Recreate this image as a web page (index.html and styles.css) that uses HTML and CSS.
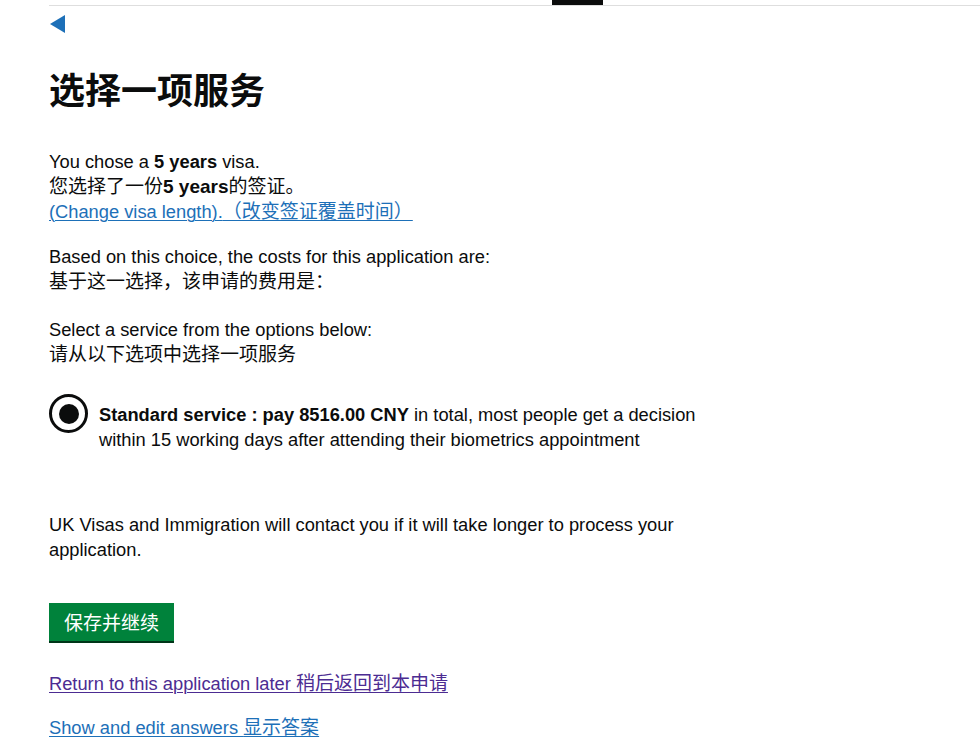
FILE: index.html
```html
<!DOCTYPE html>
<html lang="en">
<head>
<meta charset="utf-8">
<title>选择一项服务</title>
<link rel="stylesheet" href="styles.css">
</head>
<body>
<div class="top"><span class="top-bar"></span></div>
<main class="page">
  <a class="back" href="#" aria-label="Back"></a>
  <h1 class="title" lang="zh-CN">选择一项服务</h1>
  <div class="column">
    <p class="body">You chose a <b>5 years</b> visa.<br><span lang="zh-CN">您选择了一份<b>5 years</b>的签证。</span><br><a class="link" href="#">(Change visa length).<span lang="zh-CN">（改变签证覆盖时间）</span></a></p>
    <p class="body body-costs">Based on this choice, the costs for this application are:<br><span lang="zh-CN">基于这一选择，该申请的费用是：</span></p>
    <p class="body body-select">Select a service from the options below:<br><span lang="zh-CN">请从以下选项中选择一项服务</span></p>
    <div class="radio">
      <span class="radio-circle"><span class="radio-dot"></span></span>
      <label class="radio-label"><b>Standard service : pay 8516.00 CNY</b> in total, most people get a decision within 15 working days after attending their biometrics appointment</label>
    </div>
    <p class="body body-note">UK Visas and Immigration will contact you if it will take longer to process your application.</p>
    <button class="button" type="button" lang="zh-CN">保存并继续</button>
    <p class="body body-return"><a class="link link-visited" href="#">Return to this application later <span lang="zh-CN">稍后返回到本申请</span></a></p>
    <p class="body body-show"><a class="link" href="#">Show and edit answers <span lang="zh-CN">显示答案</span></a></p>
  </div>
</main>
</body>
</html>
```
FILE: styles.css
```css
html, body {
  margin: 0;
  padding: 0;
  background: #ffffff;
}
body {
  font-family: "Liberation Sans", "Noto Sans CJK SC", sans-serif;
  font-size: 18.3px;
  line-height: 25px;
  color: #0b0c0c;
}
[lang="zh-CN"] {
  font-family: "Liberation Sans", "Noto Sans CJK SC", sans-serif;
  font-size: 19px;
}
.top {
  display: flex;
  margin-left: 49px;
  height: 5px;
  border-bottom: 1px solid #dedede;
}
.top-bar {
  display: block;
  width: 51px;
  height: 5px;
  margin-left: 503px;
  background: #0b0c0c;
}
.page {
  padding-left: 49px;
}
.back {
  display: block;
  width: 0;
  height: 0;
  margin-top: 9px;
  margin-left: 1px;
  border-top: 9px solid transparent;
  border-bottom: 9px solid transparent;
  border-right: 15px solid #1d70b8;
}
.title {
  margin: 35px 0 41px;
  font-family: "Noto Sans CJK SC", sans-serif;
  font-size: 36px;
  line-height: 40px;
  font-weight: 700;
}
.column {
  width: 676px;
}
.body {
  margin: 0 0 20px;
}
.body-costs {
  margin-bottom: 23px;
}
.body-select {
  margin-bottom: 27px;
}
.link {
  color: #1d70b8;
  text-decoration: underline;
  text-decoration-thickness: 1px;
  text-underline-offset: 2px;
}
.link-visited {
  color: #4c2c92;
}
.radio {
  display: flex;
  align-items: flex-start;
  margin-bottom: 60px;
}
.radio-circle {
  flex: none;
  box-sizing: border-box;
  width: 39px;
  height: 39px;
  border: 3px solid #0b0c0c;
  border-radius: 50%;
  display: flex;
  align-items: center;
  justify-content: center;
}
.radio-dot {
  width: 20px;
  height: 20px;
  border-radius: 50%;
  background: #0b0c0c;
}
.radio-label {
  display: block;
  margin-left: 11px;
  padding-top: 8px;
}
.body-note {
  margin-bottom: 41px;
}
.button {
  display: block;
  margin: 0 0 30px;
  padding: 8px 15px;
  border: 0;
  border-radius: 0;
  background: #00823b;
  box-shadow: 0 2px 0 #003518;
  color: #ffffff;
  font-family: "Noto Sans CJK SC", sans-serif;
  font-size: 19px;
  line-height: 22px;
  cursor: pointer;
}
.body-return {
  margin-bottom: 19px;
}
.body-show {
  margin-bottom: 0;
}
```
